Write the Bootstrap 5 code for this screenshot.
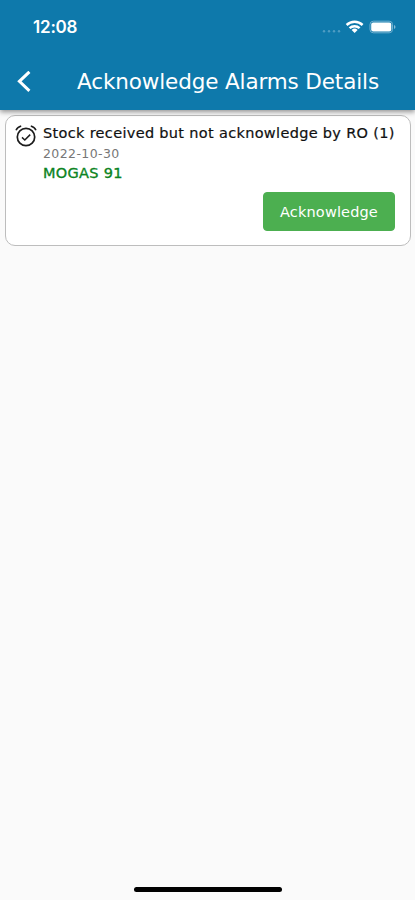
<!DOCTYPE html>
<html lang="en">
<head>
<meta charset="utf-8">
<meta name="viewport" content="width=device-width, initial-scale=1">
<title>Acknowledge Alarms Details</title>
<link href="https://cdn.jsdelivr.net/npm/bootstrap@5.3.0/dist/css/bootstrap.min.css" rel="stylesheet">
<style>
body { background: #fafafa; font-family: "DejaVu Sans", Verdana, sans-serif; height: 900px; overflow: hidden; }
.app-header { background: #0e79ab; height: 110px; box-shadow: 0 2px 5px rgba(0,0,0,.42); z-index: 1; position: relative; }
.status-bar { height: 54px; padding: 0 19px 0 33px; }
.clock { font: 600 17px/54px Inter, sans-serif; letter-spacing: -.2px; }
.title-bar { height: 56px; padding-left: 16px; }
.page-title { font-size: 21.5px; line-height: 56px; margin: 0 0 0 45px; font-weight: 400; letter-spacing: -.13px; white-space: nowrap; }
.alarm-card { margin: 5px 4px 0 5px; height: 131px; border: 1px solid #bdbdbd; border-radius: 10px; padding: 8px 15px 0 9px; }
.alarm-text { margin-left: 6px; margin-top: -1px; white-space: nowrap; }
.alarm-name { font-size: 14.5px; line-height: 20px; color: #111; letter-spacing: .32px; -webkit-text-stroke: .2px #111; }
.alarm-date { font-size: 12.5px; line-height: 21px; color: #777; letter-spacing: .4px; }
.alarm-product { font-size: 14.5px; line-height: 19px; color: #0c8423; letter-spacing: .3px; -webkit-text-stroke: .35px #0c8423; }
.btn-ack { --bs-btn-bg: #4caf50; --bs-btn-color: #fff; --bs-btn-border-color: #4caf50; --bs-btn-hover-bg: #43a047; --bs-btn-hover-color: #fff; width: 132px; height: 39px; border-radius: 4px; font-size: 14.5px; letter-spacing: .15px; padding: 2px 0 0; margin-top: 9px; white-space: nowrap; }
.home-bar { width: 148px; height: 5px; border-radius: 3px; background: #000; margin-bottom: 8px; }
</style>
</head>
<body class="d-flex flex-column">
<header class="app-header text-white flex-shrink-0">
  <div class="status-bar d-flex align-items-center justify-content-between">
    <span class="clock">12:08</span>
    <svg width="76" height="16" viewBox="0 0 76 16" fill="none">
      <g fill="#4e9cc3"><circle cx="4" cy="12.2" r="1.2"/><circle cx="9" cy="12.2" r="1.2"/><circle cx="14" cy="12.2" r="1.2"/><circle cx="19" cy="12.2" r="1.2"/></g>
      <g stroke="#fff" stroke-width="2.5"><path d="M26.6 6a11.6 11.6 0 0 1 16 0"/><path d="M29.6 9.2a7.3 7.3 0 0 1 10 0"/></g>
      <path d="M31.6 11a4.4 4.4 0 0 1 6 0L34.6 14z" fill="#fff"/>
      <rect x="50" y="2.2" width="22.5" height="11.6" rx="3.3" stroke="#72b1d1"/>
      <rect x="51.2" y="3.4" width="20.1" height="9.2" rx="2" fill="#fff"/>
      <path d="M74 6v4q1.5-.6 1.5-2T74 6" fill="#84bbd6"/>
    </svg>
  </div>
  <div class="title-bar d-flex align-items-center">
    <svg width="16" height="22" viewBox="0 0 16 22" fill="none" stroke="#fff" stroke-width="3"><path d="M13.4 .8 3.4 10.3l10 9.5"/></svg>
    <h1 class="page-title">Acknowledge Alarms Details</h1>
  </div>
</header>
<main class="flex-grow-1">
  <section class="alarm-card bg-white">
    <div class="d-flex align-items-start">
      <svg width="22" height="24" viewBox="0 0 22 24" fill="none" stroke="#1c1c1c" stroke-width="1.7" class="flex-shrink-0"><circle cx="11" cy="13" r="8.7"/><path d="M1 6.3Q2.4 3 6.2 2M15.8 2Q19.6 3 21 6.3M7 13.4l2.8 2.6 5.4-5.4" stroke-width="1.5"/></svg>
      <div class="alarm-text">
        <div class="alarm-name"><span>Stock received but not acknowledge by RO (1)</span></div>
        <div class="alarm-date"><span>2022-10-30</span></div>
        <div class="alarm-product"><span>MOGAS 91</span></div>
      </div>
    </div>
    <div class="d-flex justify-content-end"><button type="button" class="btn btn-ack">Acknowledge</button></div>
  </section>
</main>
<div class="home-bar mx-auto flex-shrink-0"></div>
<script src="https://cdn.jsdelivr.net/npm/bootstrap@5.3.0/dist/js/bootstrap.bundle.min.js"></script>
</body>
</html>
